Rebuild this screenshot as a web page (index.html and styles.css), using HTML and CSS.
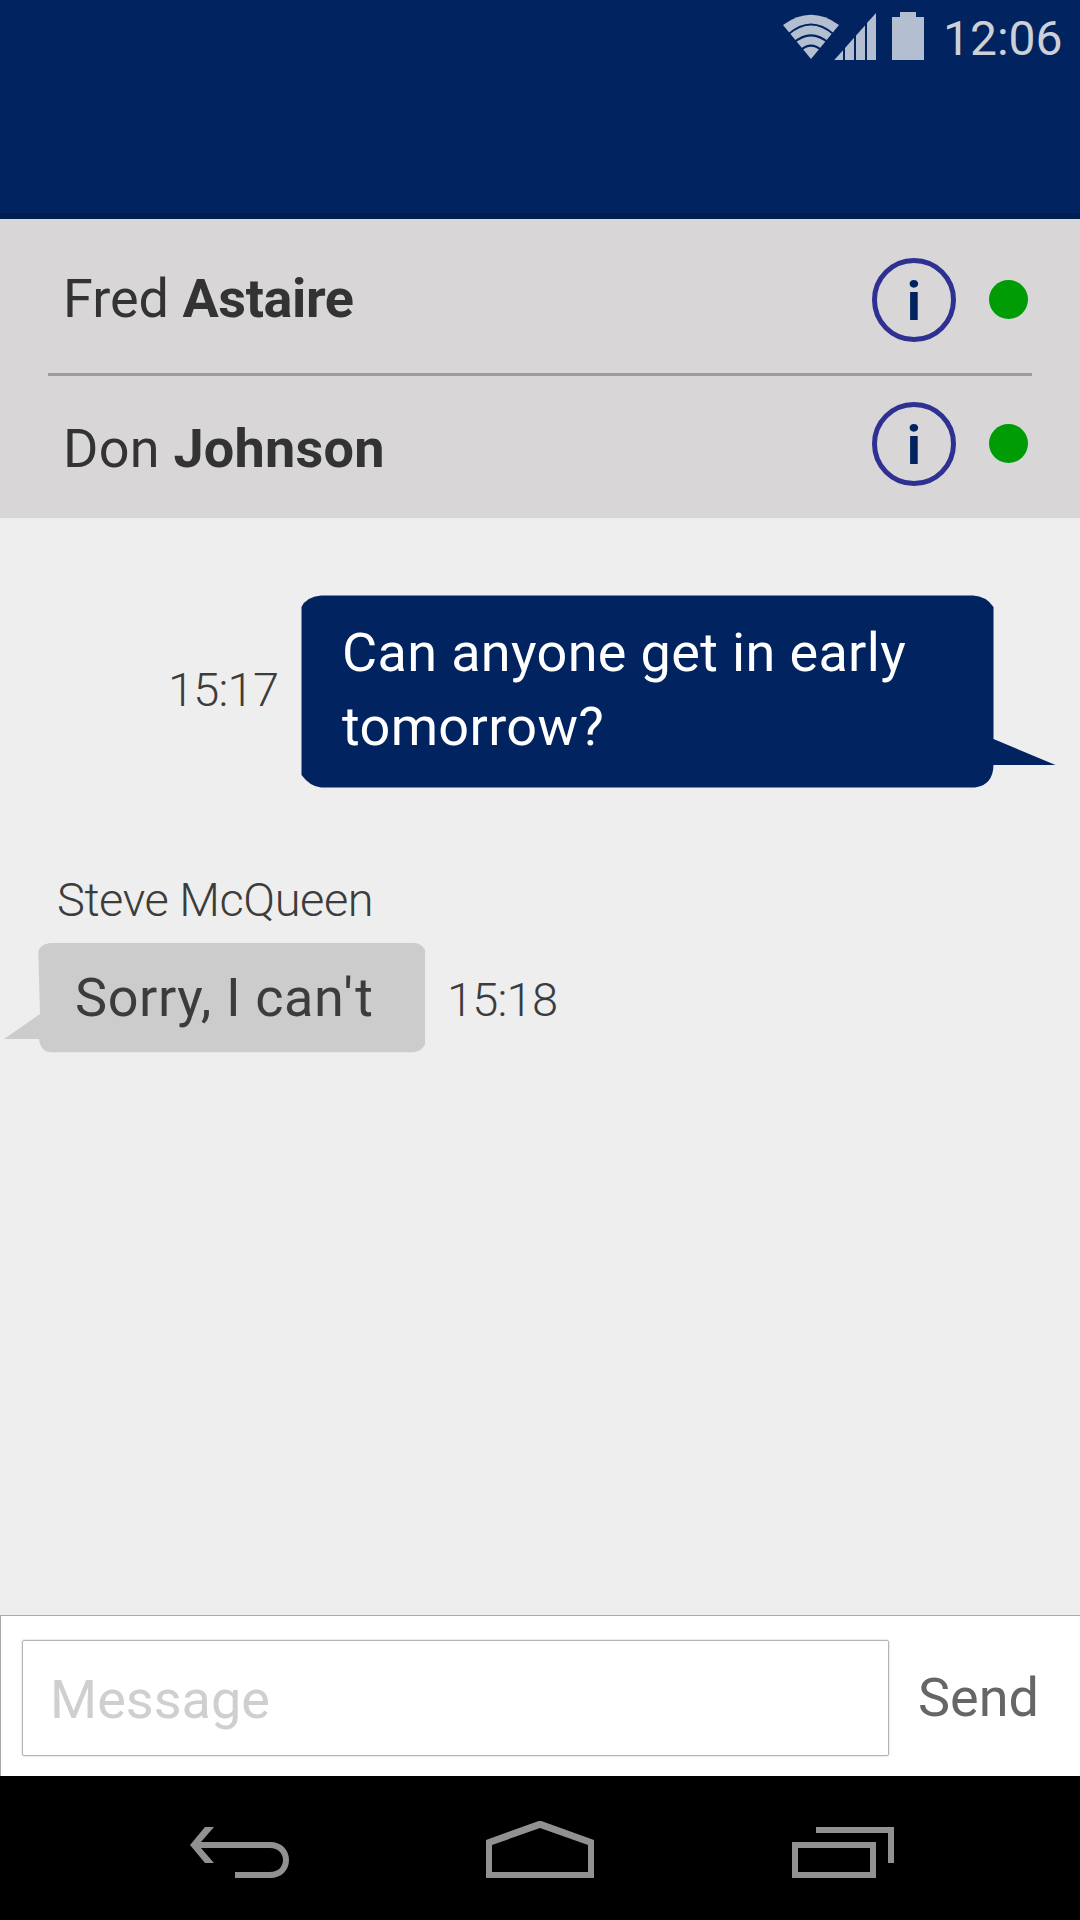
FILE: index.html
```html
<!DOCTYPE html>
<html lang="en">
<head>
<meta charset="utf-8">
<title>Group chat</title>
<link rel="stylesheet" href="styles.css">
</head>
<body>
<div class="phone">
  <header class="app-bar">
    <div class="status">
      <svg class="status-icons" width="144" height="60" viewBox="12 2 144 60" aria-hidden="true">
        <path class="status-fill" d="M41 59 13 25Q41 4.700 69 25Z"/>
        <g class="wifi-gap">
          <path d="M18 34.500Q41 14.500 64 34.500"/>
          <path d="M23 43.300Q41 27.500 59 43.300"/>
          <path d="M30.500 50.300Q41 41 51.500 50.300"/>
        </g>
        <path class="status-fill" d="M64.300 60 73 50.200V60ZM75 48 84 37.800V60H75ZM86 35.500 95 25.400V60H86ZM97 23.100 106 13V60H97Z"/>
        <path class="status-fill" d="M130 12H146V17H154V60H122V17H130Z"/>
      </svg>
      <span class="clock">12:06</span>
    </div>
  </header>

  <section class="members">
    <div class="member member-first">
      <span class="member-name">Fred <b>Astaire</b></span>
      <span class="info"><span class="info-letter">i</span></span>
      <span class="presence"></span>
    </div>
    <div class="member member-second">
      <span class="member-name">Don <b>Johnson</b></span>
      <span class="info"><span class="info-letter">i</span></span>
      <span class="presence"></span>
    </div>
  </section>

  <main class="chat">
    <div class="message message-out">
      <time class="time">15:17</time>
      <div class="bubble bubble-out">
        <svg class="bubble-shape" width="755" height="194" viewBox="0 0 755 194" aria-hidden="true">
          <path class="shape-out" d="M20 .5H672Q685 1 692.500 12V144L754.500 170H692.500Q692 190 674 192.500H20Q9 191.500 .5 180V12Q5 2 20 .5Z"/>
        </svg>
        <p class="bubble-text">Can anyone get in early<br>tomorrow?</p>
      </div>
    </div>

    <div class="sender">Steve McQueen</div>
    <div class="message message-in">
      <div class="bubble bubble-in">
        <svg class="bubble-shape bubble-shape-in" width="422" height="110" viewBox="0 0 422 110" aria-hidden="true">
          <path class="shape-in" d="M46 0H411Q418 1 421 7V101Q418 108 410 109.300H46Q36 108 35 96H0L36 71 34.300 8Q37 1 46 0Z"/>
        </svg>
        <p class="bubble-text bubble-text-in">Sorry, I ca<span class="loose">n'</span>t</p>
      </div>
      <time class="time">15:18</time>
    </div>
  </main>

  <form class="composer">
    <div class="field">Message</div>
    <div class="send">Send</div>
  </form>

  <nav class="nav">
    <svg class="nav-icon" width="100" height="58" viewBox="30 21 100 58" aria-hidden="true">
      <path d="M30 45 45 27H54L41 42H110C122 42 129 50 129 60S122 78 110 78H75V72H110C118 72 123 67 123 60S118 48 110 48H41L54 63H45Z"/>
    </svg>
    <svg class="nav-icon nav-home" width="108" height="58" viewBox="326 21 108 58" aria-hidden="true">
      <path fill-rule="evenodd" d="M326 40 380 20.500 434 40V78H326ZM332 45V72H428V45L380 28Z"/>
    </svg>
    <svg class="nav-icon nav-recents" width="102" height="58" viewBox="32 21 102 58" aria-hidden="true">
      <path fill-rule="evenodd" d="M56 27H134V63H128V33H56ZM32 42H116V78H32ZM38 48V72H110V48Z"/>
    </svg>
  </nav>
</div>
</body>
</html>
```
FILE: styles.css
```css
* { box-sizing: border-box; }

body {
  margin: 0;
  font-family: Roboto, sans-serif;
  font-size: 54px;
  color: #333;
}

.phone {
  display: flex;
  flex-direction: column;
  width: 1080px;
  height: 1920px;
  background: #eee;
  overflow: hidden;
}

/* header */
.app-bar {
  flex: none;
  height: 219px;
  background: #012460;
  border-bottom: 6px solid #001f50;
}
.status {
  display: flex;
  justify-content: flex-end;
  padding-right: 18px;
}
.status-icons { flex: none; margin: 2px 17px 0 0; }
.status-fill { fill: #b3bed1; }
.wifi-gap { fill: none; stroke: #012460; stroke-width: 2; }
.clock {
  width: 119px;
  font-size: 48px;
  line-height: 77px;
  color: #cdd0d7;
  white-space: nowrap;
}

/* member list */
.members {
  flex: none;
  height: 299px;
  padding: 0 48px;
  background: #d8d6d7;
}
.member { display: flex; align-items: flex-start; }
.member-first { height: 157px; padding-top: 39px; border-bottom: 3px solid #9c9c9c; }
.member-second { padding-top: 26px; }
.member-name {
  flex: 1;
  padding-left: 15px;
  line-height: 82px;
  white-space: nowrap;
}
.member-first b { letter-spacing: -.4px; }
.member-second .member-name { line-height: 94px; letter-spacing: .25px; }
.info {
  width: 84px;
  height: 84px;
  border: 5px solid #2e3192;
  border-radius: 50%;
  text-align: center;
}
.info-letter {
  display: block;
  line-height: 77px;
  font-weight: 700;
  color: #012460;
}
.presence {
  width: 39px;
  height: 39px;
  margin: 22px 4px 0 33px;
  border-radius: 50%;
  background: #009c06;
}

/* conversation */
.chat { flex: 1; padding-top: 77px; }
.message { display: flex; }
.message-out { padding-left: 168px; }
.time {
  font-size: 47px;
  font-weight: 300;
  line-height: 61px;
  letter-spacing: -.8px;
  color: #3c3c3c;
  white-space: nowrap;
}
.message-out .time { width: 133px; padding-top: 64px; }
.bubble { position: relative; }
.bubble-out { width: 693px; height: 193px; padding: 21px 0 0 41px; }
.bubble-shape { position: absolute; left: 0; top: 0; }
.shape-out { fill: #012460; }
.shape-in { fill: #ccc; }
.bubble-text {
  position: relative;
  margin: 0;
  line-height: 74px;
  letter-spacing: .35px;
  color: #fff;
  white-space: nowrap;
}
.sender {
  height: 61px;
  margin-top: 81px;
  padding-left: 57px;
  font-size: 47px;
  font-weight: 300;
  line-height: 62px;
  letter-spacing: -.45px;
  color: #3c3c3c;
}
.message-in { padding: 13px 0 0 38px; }
.bubble-in { width: 409px; height: 110px; padding: 18px 0 0 37px; }
.bubble-shape-in { left: -34px; }
.bubble-text-in { color: #3c3c3c; letter-spacing: .6px; }
.loose { letter-spacing: 2.4px; }
.message-in .time { padding-top: 26px; }

/* composer */
.composer {
  flex: none;
  display: flex;
  height: 161px;
  padding: 24px 0 0 21px;
  background: #fff;
  border-left: 1px solid #aaa;
  border-top: 1px solid #aaa;
}
.field {
  width: 867px;
  height: 116px;
  padding-left: 27px;
  border: 1px solid #b4b4b4;
  border-radius: 2px;
  box-shadow: 0 0 2px #bbb;
  line-height: 118px;
  color: #cfcfcf;
}
.send { padding-left: 29px; line-height: 115px; color: #666; }

/* system navigation */
.nav {
  flex: none;
  display: flex;
  height: 144px;
  padding: 45px 0 0 190px;
  background: #000;
}
.nav-icon { fill: #919191; }
.nav-home { margin-left: 196px; }
.nav-recents { margin-left: 198px; }
```
